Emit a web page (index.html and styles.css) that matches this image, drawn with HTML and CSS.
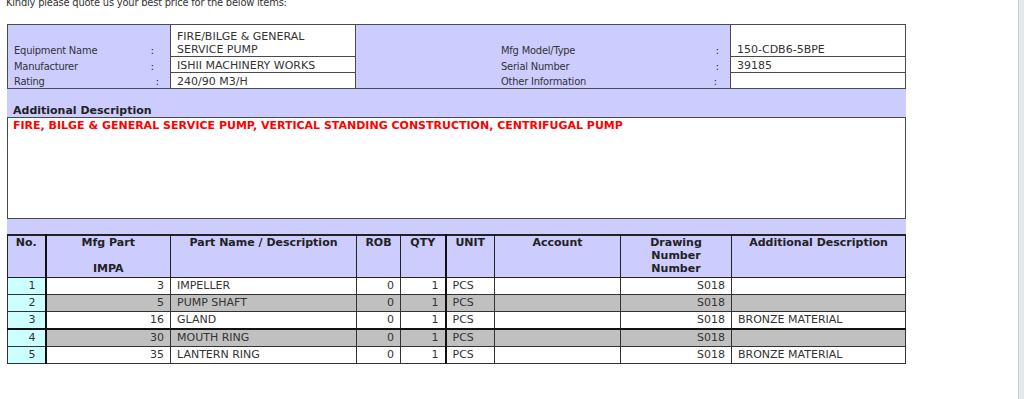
FILE: index.html
```html
<!DOCTYPE html>
<html>
<head>
<meta charset="utf-8">
<link rel="stylesheet" href="styles.css">
</head>
<body>
<div class="page">
  <main class="content">
    <p class="intro">Kindly please quote us your best price for the below items:</p>

    <table class="info">
      <colgroup>
        <col class="c-lab"><col class="c-colon"><col class="c-val"><col class="c-lab2"><col class="c-colon2"><col class="c-val2">
      </colgroup>
      <tr class="r-first">
        <td class="lab">Equipment Name</td><td class="colon">:</td>
        <td class="val">FIRE/BILGE &amp; GENERAL<br>SERVICE PUMP</td>
        <td class="lab lab2">Mfg Model/Type</td><td class="colon c2">:</td>
        <td class="val">150-CDB6-5BPE</td>
      </tr>
      <tr>
        <td class="lab">Manufacturer</td><td class="colon">:</td>
        <td class="val">ISHII MACHINERY WORKS</td>
        <td class="lab lab2">Serial Number</td><td class="colon c2">:</td>
        <td class="val">39185</td>
      </tr>
      <tr>
        <td class="lab">Rating</td><td class="colon shift">:</td>
        <td class="val">240/90 M3/H</td>
        <td class="lab lab2">Other Information</td><td class="colon back">:</td>
        <td class="val"></td>
      </tr>
    </table>

    <div class="desc-head">Additional Description</div>
    <div class="desc-box">FIRE, BILGE &amp; GENERAL SERVICE PUMP, VERTICAL STANDING CONSTRUCTION, CENTRIFUGAL PUMP</div>
    <div class="band"></div>

    <table class="items">
      <colgroup>
        <col style="width:38px"><col style="width:125px"><col style="width:186px"><col style="width:44px"><col style="width:45px"><col style="width:49px"><col style="width:126px"><col style="width:111px"><col>
      </colgroup>
      <thead>
        <tr>
          <th class="thick-r">No.</th>
          <th>Mfg Part<br><br>IMPA</th>
          <th>Part Name / Description</th>
          <th>ROB</th>
          <th class="thick-r">QTY</th>
          <th>UNIT</th>
          <th>Account</th>
          <th>Drawing<br>Number<br>Number</th>
          <th>Additional Description</th>
        </tr>
      </thead>
      <tbody>
        <tr class="odd">
          <td class="no thick-r">1</td><td class="num">3</td><td>IMPELLER</td><td class="num">0</td><td class="num thick-r">1</td><td>PCS</td><td></td><td class="num">S018</td><td></td>
        </tr>
        <tr class="even">
          <td class="no thick-r">2</td><td class="num">5</td><td>PUMP SHAFT</td><td class="num">0</td><td class="num thick-r">1</td><td>PCS</td><td></td><td class="num">S018</td><td></td>
        </tr>
        <tr class="odd">
          <td class="no thick-r">3</td><td class="num">16</td><td>GLAND</td><td class="num">0</td><td class="num thick-r">1</td><td>PCS</td><td></td><td class="num">S018</td><td>BRONZE MATERIAL</td>
        </tr>
        <tr class="even thick-t">
          <td class="no thick-r">4</td><td class="num">30</td><td>MOUTH RING</td><td class="num">0</td><td class="num thick-r">1</td><td>PCS</td><td></td><td class="num">S018</td><td></td>
        </tr>
        <tr class="odd">
          <td class="no thick-r">5</td><td class="num">35</td><td>LANTERN RING</td><td class="num">0</td><td class="num thick-r">1</td><td>PCS</td><td></td><td class="num">S018</td><td>BRONZE MATERIAL</td>
        </tr>
      </tbody>
    </table>
  </main>
  <div class="edge"></div>
</div>
</body>
</html>
```

FILE: styles.css
```css
html, body {
  margin: 0;
  padding: 0;
  height: 100%;
  background: #ffffff;
}

body {
  font-family: "DejaVu Sans", Verdana, sans-serif;
  font-size: 11px;
  line-height: 13px;
  color: #333333;
  overflow: hidden;
}

.page {
  display: flex;
  height: 399px;
}

.content {
  flex: 1;
  padding-left: 7px;
}

.edge {
  width: 5px;
  border-left: 1px solid #c9ced6;
  background: #e6e9ee;
}

.intro,
.info .lab {
  font-family: "DejaVu Sans Condensed", "DejaVu Sans", sans-serif;
  font-stretch: condensed;
  letter-spacing: -0.2px;
}

.intro {
  margin: -4px 0 15px -1px;
}

/* ---------- info table ---------- */
.info {
  width: 899px;
  border-collapse: collapse;
  border: 1px solid #4a4a4a;
  background: #ccccff;
  table-layout: fixed;
}

.c-lab { width: 138px; }
.c-colon { width: 25px; }
.c-val { width: 185px; }
.c-lab2 { width: 350px; }
.c-colon2 { width: 25px; }

.info td {
  padding: 2px 6px 0 6px;
  vertical-align: bottom;
  line-height: 13px;
  height: 13px;
}

.info .r-first td {
  height: 29px;
}

.info .colon {
  padding: 2px 0 0 5px;
}

.info .colon.shift { padding-left: 10px; }
.info .colon.c2 { padding-left: 10px; }
.info .colon.back { padding-left: 8px; }

.info .lab2 {
  padding-left: 145px;
}

.info .val {
  background: #ffffff;
  border: 1px solid #4a4a4a;
}

/* ---------- additional description ---------- */
.desc-head {
  width: 893px;
  height: 28px;
  padding: 0 0 0 6px;
  background: #ccccff;
  font-weight: bold;
  display: flex;
  align-items: flex-end;
  line-height: 13px;
  color: #222;
}

.desc-box {
  box-sizing: border-box;
  width: 899px;
  height: 102px;
  border: 1px solid #4a4a4a;
  padding: 1px 5px;
  color: #ff0000;
  font-weight: bold;
  background: #ffffff;
}

.band {
  width: 899px;
  height: 15px;
  background: #ccccff;
}

/* ---------- items table ---------- */
.items {
  width: 899px;
  border-collapse: collapse;
  table-layout: fixed;
  border: 1px solid #4a4a4a;
  border-top: 2px solid #222;
}

.items th {
  background: #ccccff;
  font-weight: bold;
  text-align: center;
  vertical-align: top;
  padding: 0 4px 1px 4px;
  border: 1px solid #222;
  color: #222;
  height: 40px;
}

.items td {
  border: 1px solid #333;
  padding: 1px 6px 2px 6px;
  height: 13px;
  white-space: nowrap;
}

.items .num { text-align: right; }

.items .no {
  text-align: right;
  padding-right: 9px;
  background: #ccffff;
}

.items .thick-r { border-right: 2px solid #111; }

.items tr.thick-t td { border-top: 2px solid #111; }

.items tr.odd td:not(.no) { background: #ffffff; }
.items tr.even td:not(.no) { background: #c0c0c0; }
```
